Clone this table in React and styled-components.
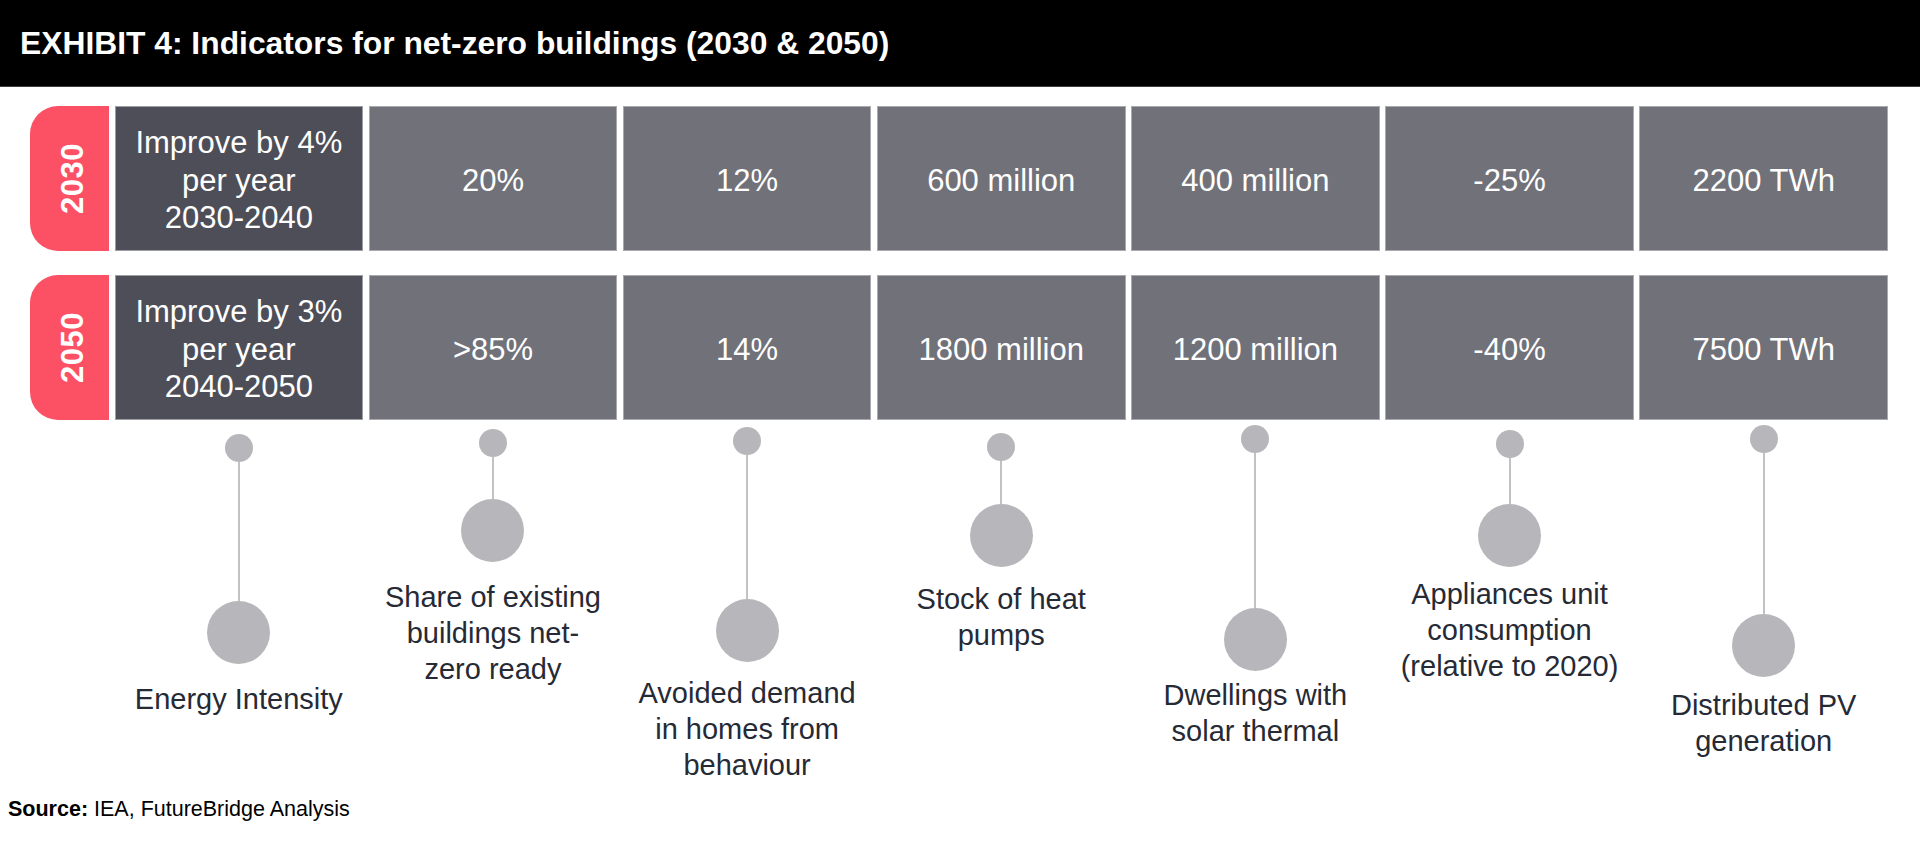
import React from "react";
import styled, { createGlobalStyle } from "styled-components";

const GlobalStyle = createGlobalStyle`
  html, body { margin: 0; padding: 0; background: #ffffff; }
  body { font-family: "Liberation Sans", Arial, sans-serif; }
  * { box-sizing: border-box; }
`;

const Page = styled.div`
  width: 1920px;
  height: 843px;
  background: #ffffff;
  overflow: hidden;
`;

const Header = styled.header`
  height: 87px;
  background: #000000;
  border-bottom: 1px solid #3f3f3f;
  display: flex;
  align-items: center;
  padding-left: 20px;
`;

const Title = styled.h1`
  margin: 0;
  color: #ffffff;
  font-size: 31.8px;
  font-weight: 700;
  letter-spacing: 0;
`;

const Board = styled.section`
  padding: 19px 32px 0 30px;
`;

const columns = `79px repeat(7, 1fr)`;

const Table = styled.div`
  display: grid;
  grid-template-columns: ${columns};
  grid-auto-rows: 145px;
  column-gap: 5.5px;
  row-gap: 24px;
`;

const YearTag = styled.div`
  background: #fc5164;
  border-radius: 28px 0 0 28px;
  display: flex;
  align-items: center;
  justify-content: center;
  padding-left: 6px;
`;

const YearText = styled.span`
  writing-mode: vertical-rl;
  transform: rotate(180deg);
  color: #ffffff;
  font-size: 31px;
  font-weight: 700;
  letter-spacing: 0.5px;
`;

const Cell = styled.div`
  background: ${(p) => (p.$dark ? "#4e4e58" : "#71717a")};
  border: 1px solid ${(p) => (p.$dark ? "#9d9da4" : "#a9a9af")};
  color: #ffffff;
  display: flex;
  align-items: center;
  justify-content: center;
  text-align: center;
  font-size: 31px;
  line-height: 37.5px;
  padding-top: 4px;
`;

const Pins = styled.div`
  display: grid;
  grid-template-columns: ${columns};
  column-gap: 5.5px;
  height: 374px;
  align-items: start;
`;

const Pin = styled.div`
  grid-column: ${(p) => p.$col};
  display: flex;
  flex-direction: column;
  align-items: center;
  padding-top: ${(p) => p.$top}px;
`;

const SmallDot = styled.div`
  width: 28px;
  height: 28px;
  border-radius: 50%;
  background: #b7b7bb;
`;

const Stem = styled.div`
  width: 2px;
  height: ${(p) => p.$len}px;
  background: #c2c2c6;
`;

const BigDot = styled.div`
  width: 63px;
  height: 63px;
  border-radius: 50%;
  background: #b7b7bb;
`;

const Label = styled.div`
  margin-top: ${(p) => p.$gap}px;
  text-align: center;
  color: #262a35;
  font-size: 29px;
  line-height: 36px;
  white-space: nowrap;
`;

const Source = styled.p`
  margin: 0;
  padding: 3px 0 0 8px;
  font-size: 21.5px;
  line-height: 24px;
  color: #000000;
`;

const rows = [
  {
    year: "2030",
    first: ["Improve by 4%", "per year", "2030-2040"],
    values: ["20%", "12%", "600 million", "400 million", "-25%", "2200 TWh"],
  },
  {
    year: "2050",
    first: ["Improve by 3%", "per year", "2040-2050"],
    values: [">85%", "14%", "1800 million", "1200 million", "-40%", "7500 TWh"],
  },
];

const pins = [
  { top: 14, len: 139, gap: 17, lines: ["Energy Intensity"] },
  { top: 9, len: 42, gap: 17, lines: ["Share of existing", "buildings net-", "zero ready"] },
  { top: 7, len: 144, gap: 13, lines: ["Avoided demand", "in homes from", "behaviour"] },
  { top: 13, len: 43, gap: 14, lines: ["Stock of heat", "pumps"] },
  { top: 5, len: 155, gap: 6, lines: ["Dwellings with", "solar thermal"] },
  { top: 10, len: 46, gap: 9, lines: ["Appliances unit", "consumption", "(relative to 2020)"] },
  { top: 5, len: 161, gap: 10, lines: ["Distributed PV", "generation"] },
];

export default function App() {
  return (
    <Page>
      <GlobalStyle />
      <Header>
        <Title>EXHIBIT 4: Indicators for net-zero buildings (2030 &amp; 2050)</Title>
      </Header>
      <Board>
        <Table>
          {rows.map((r) => (
            <React.Fragment key={r.year}>
              <YearTag>
                <YearText>{r.year}</YearText>
              </YearTag>
              <Cell $dark>
                <div>
                  {r.first.map((l) => (
                    <div key={l}>{l}</div>
                  ))}
                </div>
              </Cell>
              {r.values.map((v) => (
                <Cell key={v}>{v}</Cell>
              ))}
            </React.Fragment>
          ))}
        </Table>
        <Pins>
          {pins.map((p, i) => (
            <Pin key={i} $col={i + 2} $top={p.top}>
              <SmallDot />
              <Stem $len={p.len} />
              <BigDot />
              <Label $gap={p.gap}>
                {p.lines.map((l) => (
                  <div key={l}>{l}</div>
                ))}
              </Label>
            </Pin>
          ))}
        </Pins>
      </Board>
      <Source>
        <b>Source:</b> IEA, FutureBridge Analysis
      </Source>
    </Page>
  );
}
